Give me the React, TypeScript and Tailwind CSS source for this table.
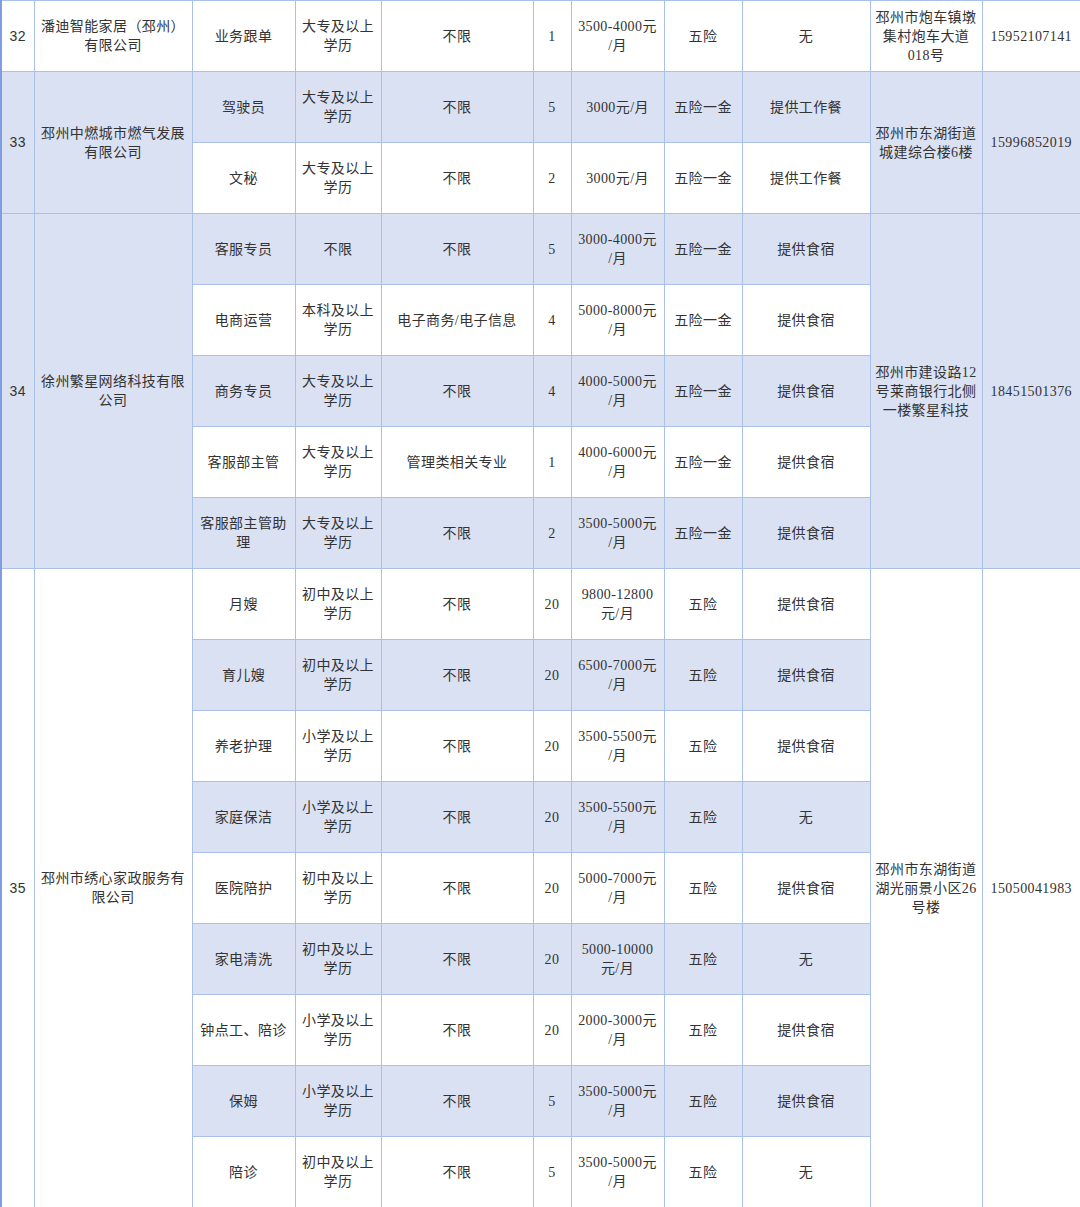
import React from "react";

type Job = { pos: string; edu: string; major: string; num: string; pay: React.ReactNode; ins: string; ben: string };
type Co = { id: string; name: string; addr: string; phone: string; jobs: Job[] };

const j = (pos: string, edu: string, major: string, num: string, pay: React.ReactNode, ins: string, ben: string): Job => ({ pos, edu, major, num, pay, ins, ben });

const p2 = (a: string, b: string) => (
  <>
    {a}
    <br />
    {b}
  </>
);

const data: Co[] = [
  {
    id: "32",
    name: "潘迪智能家居（邳州）有限公司",
    addr: "邳州市炮车镇墩集村炮车大道018号",
    phone: "15952107141",
    jobs: [j("业务跟单", "大专及以上学历", "不限", "1", p2("3500-4000元", "/月"), "五险", "无")],
  },
  {
    id: "33",
    name: "邳州中燃城市燃气发展有限公司",
    addr: "邳州市东湖街道城建综合楼6楼",
    phone: "15996852019",
    jobs: [
      j("驾驶员", "大专及以上学历", "不限", "5", "3000元/月", "五险一金", "提供工作餐"),
      j("文秘", "大专及以上学历", "不限", "2", "3000元/月", "五险一金", "提供工作餐"),
    ],
  },
  {
    id: "34",
    name: "徐州繁星网络科技有限公司",
    addr: "邳州市建设路12号莱商银行北侧一楼繁星科技",
    phone: "18451501376",
    jobs: [
      j("客服专员", "不限", "不限", "5", p2("3000-4000元", "/月"), "五险一金", "提供食宿"),
      j("电商运营", "本科及以上学历", "电子商务/电子信息", "4", p2("5000-8000元", "/月"), "五险一金", "提供食宿"),
      j("商务专员", "大专及以上学历", "不限", "4", p2("4000-5000元", "/月"), "五险一金", "提供食宿"),
      j("客服部主管", "大专及以上学历", "管理类相关专业", "1", p2("4000-6000元", "/月"), "五险一金", "提供食宿"),
      j("客服部主管助理", "大专及以上学历", "不限", "2", p2("3500-5000元", "/月"), "五险一金", "提供食宿"),
    ],
  },
  {
    id: "35",
    name: "邳州市绣心家政服务有限公司",
    addr: "邳州市东湖街道湖光丽景小区26号楼",
    phone: "15050041983",
    jobs: [
      j("月嫂", "初中及以上学历", "不限", "20", p2("9800-12800", "元/月"), "五险", "提供食宿"),
      j("育儿嫂", "初中及以上学历", "不限", "20", p2("6500-7000元", "/月"), "五险", "提供食宿"),
      j("养老护理", "小学及以上学历", "不限", "20", p2("3500-5500元", "/月"), "五险", "提供食宿"),
      j("家庭保洁", "小学及以上学历", "不限", "20", p2("3500-5500元", "/月"), "五险", "无"),
      j("医院陪护", "初中及以上学历", "不限", "20", p2("5000-7000元", "/月"), "五险", "提供食宿"),
      j("家电清洗", "初中及以上学历", "不限", "20", p2("5000-10000", "元/月"), "五险", "无"),
      j("钟点工、陪诊", "小学及以上学历", "不限", "20", p2("2000-3000元", "/月"), "五险", "提供食宿"),
      j("保姆", "小学及以上学历", "不限", "5", p2("3500-5000元", "/月"), "五险", "提供食宿"),
      j("陪诊", "初中及以上学历", "不限", "5", p2("3500-5000元", "/月"), "五险", "无"),
    ],
  },
];

const cell = "border border-[#a9c0ea] px-[4px] text-center align-middle";

export default function App() {
  let g = 0;
  const rows: React.ReactNode[] = [];
  data.forEach((co) => {
    co.jobs.forEach((jb, i) => {
      const shaded = g % 2 === 1;
      const bg = shaded ? "bg-[#dae1f3]" : "bg-white";
      const span = co.jobs.length;
      rows.push(
        <tr key={co.id + i} className={`h-[71px] ${bg}`}>
          {i === 0 && (
            <>
              <td rowSpan={span} className={`${cell} ${bg} border-l-2 border-l-[#7f9de0]`} style={{ fontFamily: '"Liberation Sans", "Noto Sans CJK SC", sans-serif' }}>
                {co.id}
              </td>
              <td rowSpan={span} className={`${cell} ${bg}`}>{co.name}</td>
            </>
          )}
          <td className={cell}>{jb.pos}</td>
          <td className={cell}>{jb.edu}</td>
          <td className={cell}>{jb.major}</td>
          <td className={cell}>{jb.num}</td>
          <td className={`${cell} whitespace-nowrap px-0`}>{jb.pay}</td>
          <td className={cell}>{jb.ins}</td>
          <td className={cell}>{jb.ben}</td>
          {i === 0 && (
            <>
              <td rowSpan={span} className={`${cell} ${bg}`}>{co.addr}</td>
              <td rowSpan={span} className={`${cell} ${bg} border-r-2 border-r-[#7f9de0]`}>{co.phone}</td>
            </>
          )}
        </tr>
      );
      g++;
    });
  });

  return (
    <div className="w-[1080px] bg-white">
      <table
        className="w-[1080px] table-fixed border-collapse text-[14px] leading-[19px] tracking-[0.4px] text-[#333333]"
        style={{ fontFamily: '"Liberation Serif", "Noto Sans CJK SC", serif' }}
      >
        <colgroup>
          <col className="w-[33px]" />
          <col className="w-[158px]" />
          <col className="w-[103px]" />
          <col className="w-[86px]" />
          <col className="w-[152px]" />
          <col className="w-[38px]" />
          <col className="w-[93px]" />
          <col className="w-[78px]" />
          <col className="w-[128px]" />
          <col className="w-[112px]" />
          <col className="w-[99px]" />
        </colgroup>
        <tbody>{rows}</tbody>
      </table>
    </div>
  );
}
